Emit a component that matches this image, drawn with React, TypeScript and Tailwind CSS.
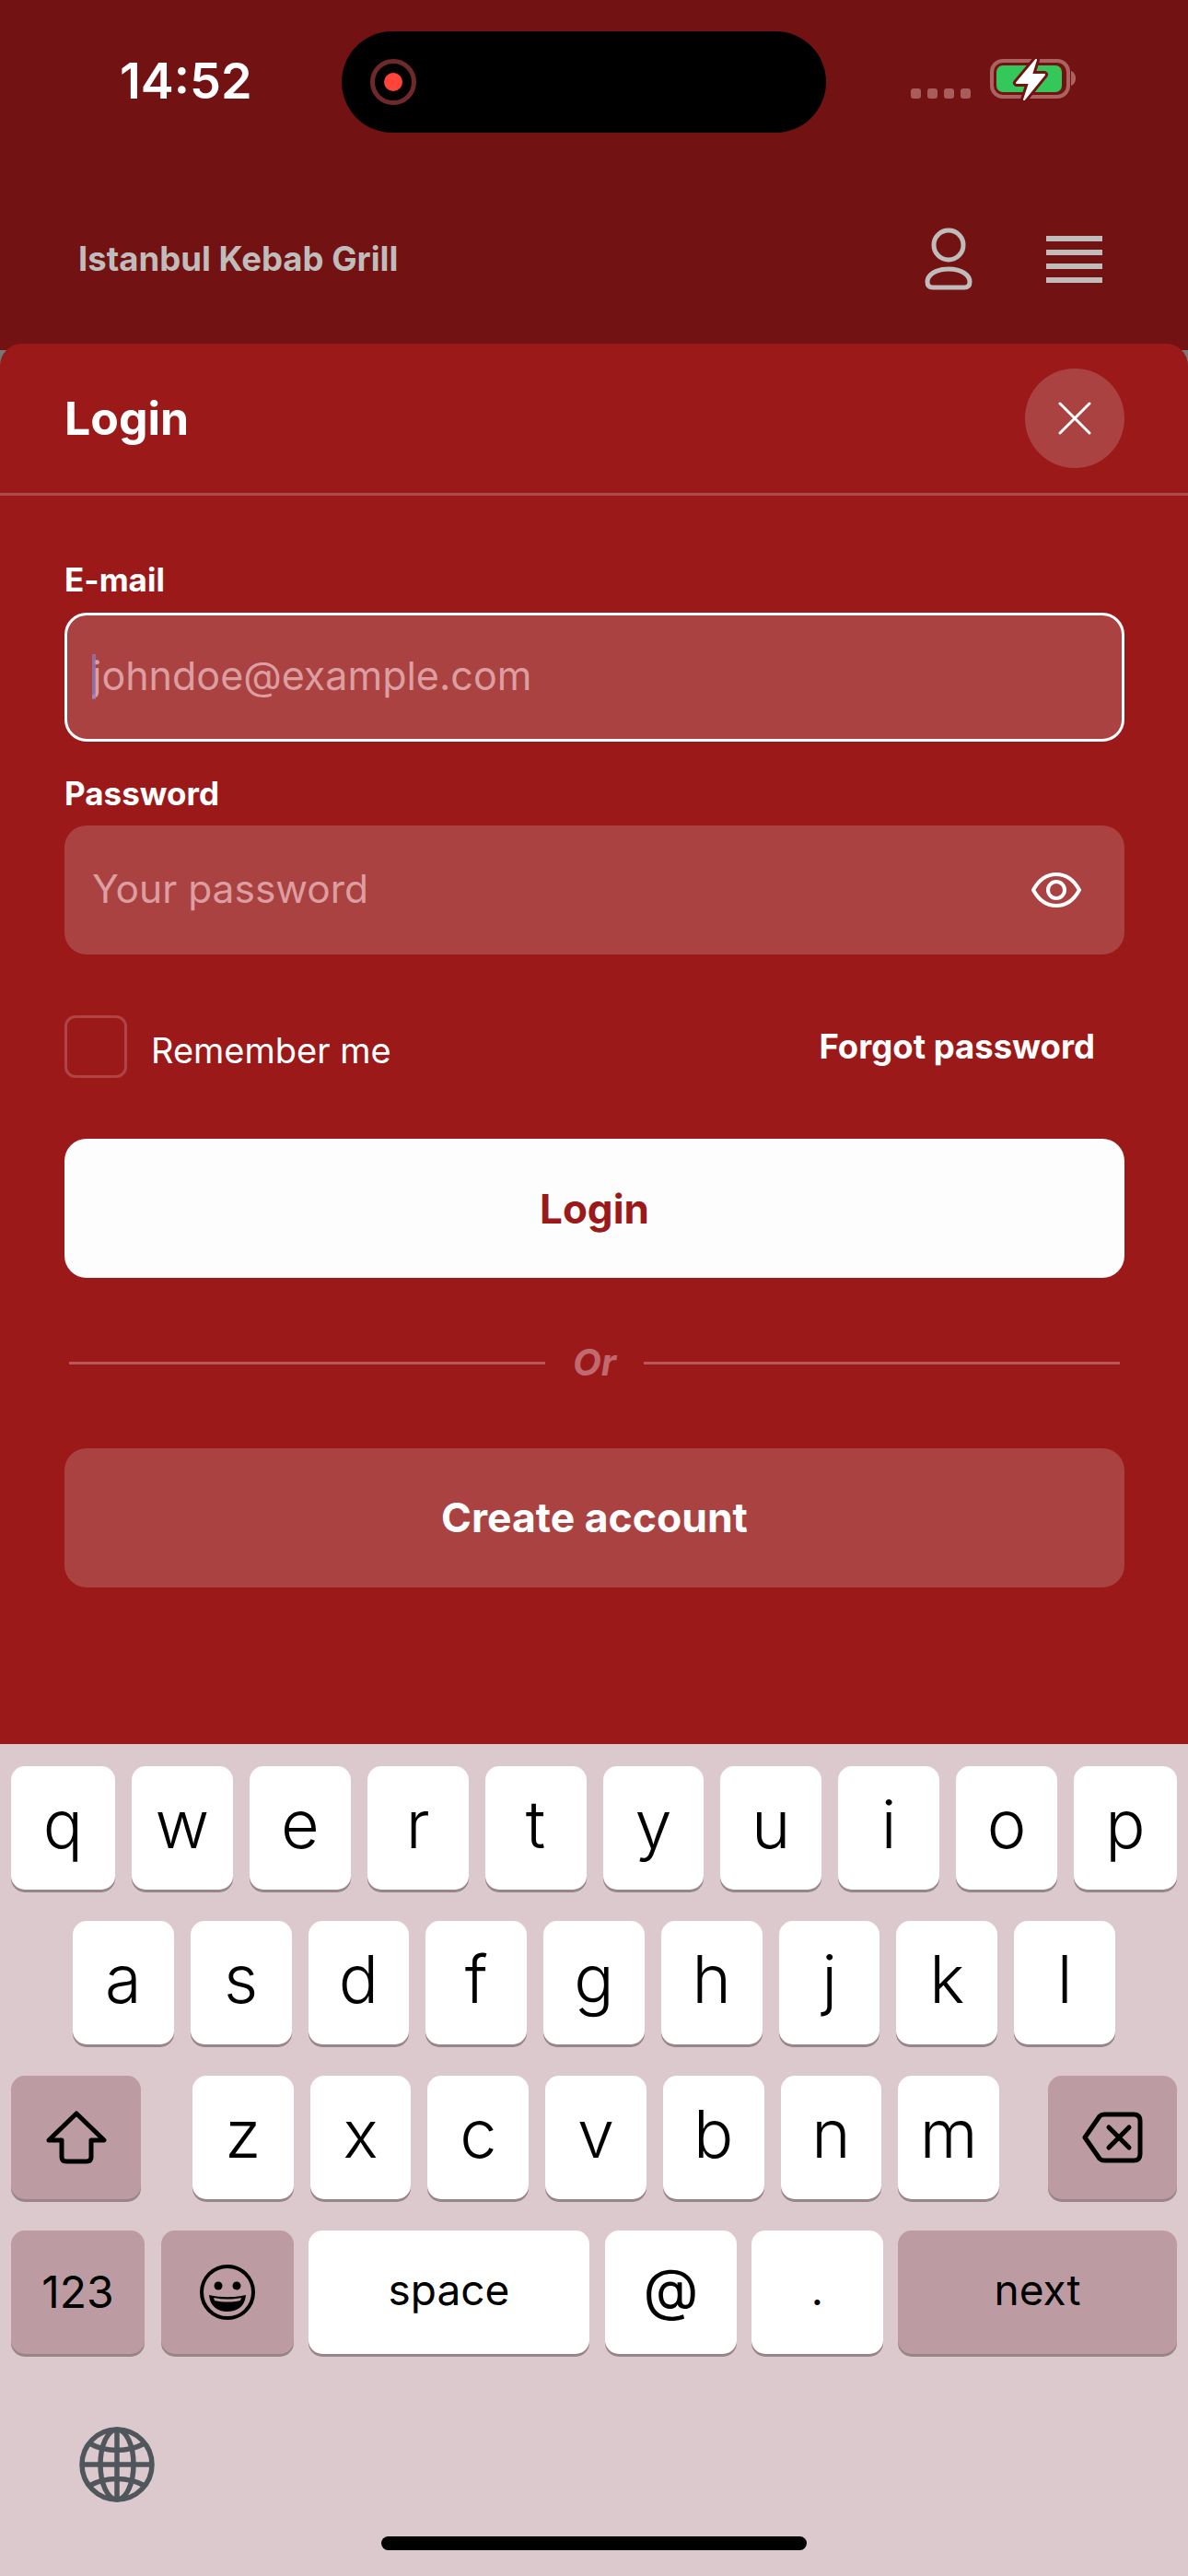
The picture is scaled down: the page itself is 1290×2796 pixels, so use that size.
const ROW_1 = ['w', 'e', 'r', 't', 'y', 'u', 'i', 'o']
const ROW_2 = ['a', 's', 'd', 'f', 'g', 'h', 'j', 'k', 'l']
const ROW_3 = ['z', 'x', 'c', 'v', 'b', 'n', 'm']

const BOLT = 'M57 7 L36 32 H50 L44 50 L66 23 H52 Z'

function Battery() {
  return (
    <svg width="100" height="52" viewBox="0 0 100 52" fill="none" aria-hidden="true">
      <rect x="9" y="8" width="83" height="39" rx="12" stroke="#ad6262" strokeWidth="4" />
      <rect x="14" y="13" width="71" height="29" rx="7" fill="#34c759" />
      <path d="M95 19c3 1 5 4 5 8s-2 7-5 8z" fill="#ad6262" />
      <path d={BOLT} fill="#731212" stroke="#731212" strokeWidth="8" strokeLinejoin="round" />
      <path d={BOLT} fill="#fff" stroke="#fff" strokeWidth="2" strokeLinejoin="round" />
    </svg>
  )
}

function UserIcon() {
  return (
    <svg width="56" height="68" viewBox="0 0 56 68" fill="none" stroke="#c0bcbc" strokeWidth="5" aria-hidden="true">
      <circle cx="28" cy="19" r="16" />
      <path d="M28 45c-15 0-23 7-23 14 0 4 2 6 6 6h34c4 0 6-2 6-6 0-7-8-14-23-14z" />
    </svg>
  )
}

function EyeIcon() {
  return (
    <svg width="54" height="40" viewBox="0 0 54 40" fill="none" stroke="#fff" strokeWidth="4" aria-hidden="true">
      <path d="M2 20C8 9 17 3 27 3s19 6 25 17c-6 11-15 17-25 17S8 31 2 20z" strokeLinejoin="round" />
      <circle cx="27" cy="20" r="9" />
    </svg>
  )
}

function ShiftIcon() {
  return (
    <svg width="66" height="58" viewBox="0 0 66 58" fill="none" stroke="#000" strokeWidth="5" strokeLinejoin="round" aria-hidden="true">
      <path d="M33 3 L63 32 H49 V50 Q49 55 44 55 H22 Q17 55 17 50 V32 H3 Z" />
    </svg>
  )
}

function BackspaceIcon() {
  return (
    <svg width="66" height="56" viewBox="0 0 66 56" fill="none" stroke="#000" strokeWidth="5" strokeLinecap="round" strokeLinejoin="round" aria-hidden="true">
      <path d="M24 3 H56 Q63 3 63 10 V46 Q63 53 56 53 H24 Q21 53 19 51 L3 28 L19 5 Q21 3 24 3 Z" />
      <path d="M29 17 L51 39 M51 17 L29 39" />
    </svg>
  )
}

function EmojiIcon() {
  return (
    <svg width="62" height="62" viewBox="0 0 62 62" fill="none" aria-hidden="true">
      <circle cx="31" cy="31" r="28" stroke="#000" strokeWidth="4" />
      <circle cx="21" cy="24" r="4.5" fill="#000" />
      <circle cx="41" cy="24" r="4.5" fill="#000" />
      <path d="M11 34c13 3 27 3 40 0-1 12-9 18-20 18S12 46 11 34z" fill="#000" />
      <path d="M16 37c10 2 20 2 30 0l-1 3c-9 2-19 2-28 0z" fill="#bc9ba2" />
    </svg>
  )
}

function GlobeIcon() {
  return (
    <svg width="82" height="82" viewBox="0 0 82 82" fill="none" stroke="#4f565c" strokeWidth="5.5" aria-hidden="true">
      <circle cx="41" cy="41" r="38" />
      <ellipse cx="41" cy="41" rx="18" ry="38" />
      <path d="M41 3v76M3 41h76" />
      <path d="M11 18c18 10 42 10 60 0M11 64c18-10 42-10 60 0" />
    </svg>
  )
}

function Key({ children, className = '' }: { children: React.ReactNode; className?: string }) {
  return (
    <div
      className={`flex h-[134px] items-center justify-center rounded-[15px] bg-white text-black shadow-[0_3px_0_#988589] ${className}`}
    >
      {children}
    </div>
  )
}

function Letter({ value, className = 'flex-1' }: { value: string; className?: string }) {
  return <Key className={`${className} pb-[8px] text-[72px] font-light leading-none`}>{value}</Key>
}

export default function App() {
  return (
    <div className="flex h-[2796px] w-[1290px] flex-col overflow-hidden bg-[#777777] font-['Inter',sans-serif]">
      <header className="h-[380px] shrink-0 bg-[#731212]">
        <div className="flex h-[144px] items-start pt-[34px]">
          <span className="mt-[22px] w-[371px] pl-[130px] text-[54px] font-semibold leading-[64px] text-white">
            14:52
          </span>
          <div className="flex h-[110px] w-[526px] items-center rounded-[55px] bg-black pl-[31px]">
            <div className="flex h-[50px] w-[50px] items-center justify-center rounded-full border-[5px] border-[#6e2a2a]">
              <div className="h-[20px] w-[20px] rounded-full bg-[#ff453a]" />
            </div>
          </div>
          <div className="ml-[92px] mt-[62px] flex gap-[7px]">
            <span className="h-[11px] w-[11px] rounded-[3px] bg-[#a85c5c]" />
            <span className="h-[11px] w-[11px] rounded-[3px] bg-[#a85c5c]" />
            <span className="h-[11px] w-[11px] rounded-[3px] bg-[#a85c5c]" />
            <span className="h-[11px] w-[11px] rounded-[3px] bg-[#a85c5c]" />
          </div>
          <div className="ml-[14px] mt-[24px]">
            <Battery />
          </div>
        </div>
        <div className="flex items-center pl-[85px] pt-[103px]">
          <span className="flex-1 text-[36.5px] font-bold leading-[42px] text-[#c0bcbc]">Istanbul Kebab Grill</span>
          <UserIcon />
          <div className="ml-[78px] mr-[93px] flex w-[61px] flex-col gap-[9px]">
            <span className="h-[6px] bg-[#c0bcbc]" />
            <span className="h-[6px] bg-[#c0bcbc]" />
            <span className="h-[6px] bg-[#c0bcbc]" />
            <span className="h-[6px] bg-[#c0bcbc]" />
          </div>
        </div>
      </header>

      <main className="mt-[-7px] h-[1520px] shrink-0 rounded-t-[24px] bg-[#9b1919]">
        <div className="flex h-[165px] items-center justify-between border-b-[3px] border-[#b04a4a] pl-[70px] pr-[69px]">
          <h1 className="text-[50px] font-bold leading-none text-white">Login</h1>
          <button type="button" aria-label="Close" className="flex h-[108px] w-[108px] items-center justify-center rounded-full bg-[#ab4242]">
            <svg width="36" height="36" viewBox="0 0 36 36" stroke="#fff" strokeWidth="3" strokeLinecap="round" aria-hidden="true">
              <path d="M2 2 L34 34 M34 2 L2 34" />
            </svg>
          </button>
        </div>

        <div className="pl-[70px] pr-[69px] pt-[71px]">
          <label className="mb-[16px] block text-[35px] font-bold leading-[40px] text-white">E-mail</label>
          <div className="relative h-[140px] rounded-[24px] border-[3px] border-white bg-[#ab4242]">
            <input
              readOnly
              placeholder="johndoe@example.com"
              className="h-[130px] w-full bg-transparent pl-[27px] text-[43px] outline-none placeholder:text-[#dc9ea0]"
            />
            <span className="absolute left-[27px] top-[42px] h-[49px] w-[4px] bg-[#8a80c4]/70" />
          </div>

          <label className="mb-[15px] mt-[36px] block text-[35px] font-bold leading-[40px] text-white">Password</label>
          <div className="flex h-[140px] items-center rounded-[24px] bg-[#ab4242] pl-[30px] pr-[47px]">
            <input
              readOnly
              placeholder="Your password"
              className="mb-[3px] h-[130px] flex-1 bg-transparent text-[42.5px] outline-none placeholder:text-[#dc9ea0]"
            />
            <EyeIcon />
          </div>

          <div className="mt-[66px] flex h-[68px] items-center">
            <span className="h-[68px] w-[68px] rounded-[12px] border-[3px] border-[#b04444]" />
            <span className="ml-[26px] flex-1 pt-[8px] text-[38px] leading-none text-white">Remember me</span>
            <span className="mr-[32px] text-[36.5px] font-bold leading-none text-white">Forgot password</span>
          </div>

          <button type="button" className="mt-[66px] h-[151px] w-full rounded-[24px] bg-[#fdfdfd] text-[44px] font-bold text-[#9b1919]">
            Login
          </button>

          <div className="mt-[72px] flex h-[40px] items-center gap-[30px] px-[5px]">
            <span className="h-[3px] flex-1 bg-[#b8585b]" />
            <span className="text-[40px] font-bold italic leading-none text-[#c0696f]">Or</span>
            <span className="h-[3px] flex-1 bg-[#b8585b]" />
          </div>

          <button type="button" className="mt-[73px] h-[151px] w-full rounded-[24px] bg-[#ab4242] text-[44.5px] font-bold text-white">
            Create account
          </button>
        </div>
      </main>

      <section className="flex-1 bg-[#dcc9cd] px-[12px] pt-[24px]">
        <div className="flex gap-[18px]">
          <Letter value="q" className="w-[113px]" />
          {ROW_1.map((k) => (
            <Letter key={k} value={k} />
          ))}
          <Letter value="p" className="w-[112px]" />
        </div>
        <div className="mt-[34px] flex gap-[18px] px-[67px]">
          {ROW_2.map((k) => (
            <Letter key={k} value={k} />
          ))}
        </div>
        <div className="mt-[34px] flex">
          <Key className="w-[141px] !bg-[#bc9ba2]">
            <ShiftIcon />
          </Key>
          <div className="ml-[56px] mr-[53px] flex flex-1 gap-[18px]">
            {ROW_3.map((k) => (
              <Letter key={k} value={k} />
            ))}
          </div>
          <Key className="w-[140px] !bg-[#bc9ba2]">
            <BackspaceIcon />
          </Key>
        </div>
        <div className="mt-[34px] flex text-[46px] leading-none">
          <Key className="w-[145px] text-[48px] !bg-[#bc9ba2]">123</Key>
          <Key className="ml-[18px] w-[144px] !bg-[#bc9ba2]">
            <EmojiIcon />
          </Key>
          <Key className="ml-[16px] w-[305px] pb-[6px]">space</Key>
          <Key className="ml-[17px] w-[143px] pb-[6px] text-[62px]">@</Key>
          <Key className="ml-[16px] w-[143px] pb-[6px]">.</Key>
          <Key className="ml-[16px] flex-1 pb-[6px] !bg-[#bc9ba2]">next</Key>
        </div>
        <div className="ml-[74px] mt-[79px]">
          <GlobeIcon />
        </div>
        <div className="mx-auto mt-[37px] h-[15px] w-[462px] rounded-full bg-black" />
      </section>
    </div>
  )
}
